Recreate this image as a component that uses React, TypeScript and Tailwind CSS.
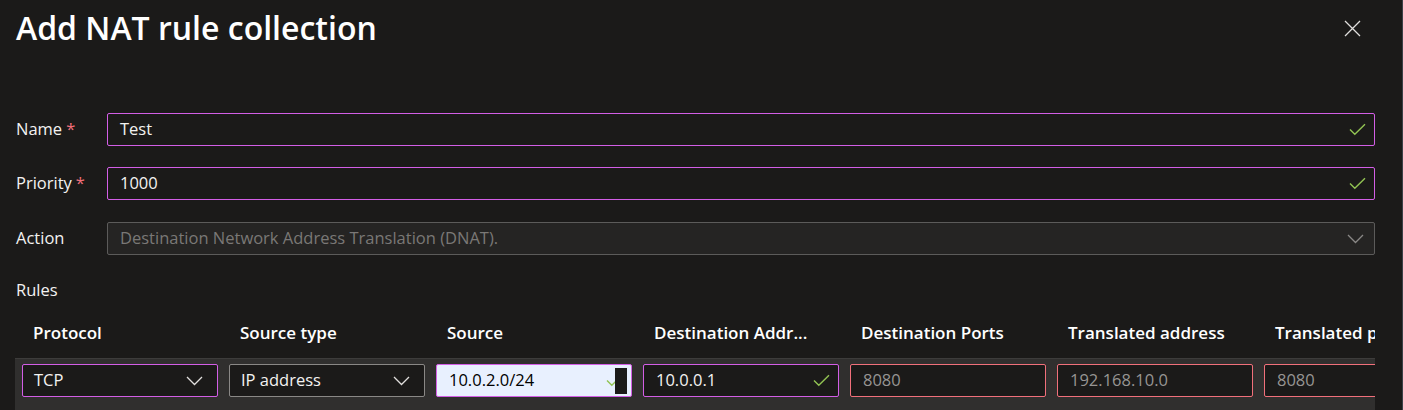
import React from "react";

const font = "font-['Segoe_UI','Open_Sans',sans-serif]";

function Check() {
  return (
    <svg width="17" height="13" viewBox="0 0 17 13" fill="none">
      <path d="M1 6.5 L5.8 11.3 L16 1.2" stroke="#92c353" strokeWidth="1.4" />
    </svg>
  );
}

function Chevron({ color = "#e1dfdd" }: { color?: string }) {
  return (
    <svg width="17" height="10" viewBox="0 0 17 10" fill="none">
      <path d="M1 1 L8.5 8.5 L16 1" stroke={color} strokeWidth="1.3" />
    </svg>
  );
}

function FieldRow({
  label,
  required,
  children,
  className = "",
}: {
  label: string;
  required?: boolean;
  children: React.ReactNode;
  className?: string;
}) {
  return (
    <div className={`flex items-center ${className}`}>
      <div className="w-[91px] shrink-0 text-[16.5px] text-[#f3f2f1]">
        {label}
        {required && <span className="ml-1 text-[#f1707b]">*</span>}
      </div>
      {children}
    </div>
  );
}

type Cell = {
  value: string;
  kind: "select" | "valid" | "autofill" | "error";
};

const headers = [
  "Protocol",
  "Source type",
  "Source",
  "Destination Addr...",
  "Destination Ports",
  "Translated address",
  "Translated p",
];

const cells: Cell[] = [
  { value: "TCP", kind: "select" },
  { value: "IP address", kind: "select" },
  { value: "10.0.2.0/24", kind: "autofill" },
  { value: "10.0.0.1", kind: "valid" },
  { value: "8080", kind: "error" },
  { value: "192.168.10.0", kind: "error" },
  { value: "8080", kind: "error" },
];

function RuleCell({ cell, index }: { cell: Cell; index: number }) {
  if (cell.kind === "select") {
    const border = index === 0 ? "border-[#d35ee6]" : "border-[#8a8886]";
    return (
      <div
        className={`flex h-[33px] w-[196px] shrink-0 items-center justify-between rounded-[2px] border ${border} bg-[#1b1a19] pl-[11px] pr-[14px] text-[16.5px] text-[#f3f2f1]`}
      >
        <span>{cell.value}</span>
        <Chevron />
      </div>
    );
  }
  if (cell.kind === "autofill") {
    return (
      <div className="flex h-[33px] w-[196px] shrink-0 items-center justify-between rounded-[2px] border border-[#d35ee6] bg-[#e8f0fe] pl-[12px] pr-[4px] text-[16.5px] text-[#000000]">
        <span>{cell.value}</span>
        <div className="flex items-center">
          <Check />
          <div className="-ml-[8px] h-[26px] w-[12px] bg-[#1b1a19]" />
        </div>
      </div>
    );
  }
  if (cell.kind === "valid") {
    return (
      <div className="flex h-[33px] w-[196px] shrink-0 items-center justify-between rounded-[2px] border border-[#d35ee6] bg-[#1b1a19] pl-[12px] pr-[8px] text-[16.5px] text-[#f3f2f1]">
        <span>{cell.value}</span>
        <Check />
      </div>
    );
  }
  return (
    <div className="flex h-[33px] w-[196px] shrink-0 items-center rounded-[2px] border border-[#f1707b] bg-[#1b1a19] pl-[12px] text-[16.5px] text-[#979593]">
      {cell.value}
    </div>
  );
}

export default function App() {
  return (
    <div
      className={`${font} h-[410px] w-[1403px] overflow-hidden border-r border-[#3b4047] bg-[#1b1a19] pl-[16px] pr-[27px]`}
    >
      <div className="flex items-start justify-between pt-[8px]">
        <h1 className="text-[32px] font-semibold leading-[40px] text-[#ffffff]">
          Add NAT rule collection
        </h1>
        <svg
          className="mr-[14px] mt-[12px]"
          width="17"
          height="17"
          viewBox="0 0 17 17"
          fill="none"
        >
          <path d="M1 1 L16 16 M16 1 L1 16" stroke="#e1dfdd" strokeWidth="1.3" />
        </svg>
      </div>

      <FieldRow label="Name" required className="mt-[65px]">
        <div className="flex h-[33px] flex-1 items-center justify-between rounded-[2px] border border-[#d35ee6] pl-[12px] pr-[8px] text-[16.5px] text-[#f3f2f1]">
          <span>Test</span>
          <Check />
        </div>
      </FieldRow>

      <FieldRow label="Priority" required className="mt-[21px]">
        <div className="flex h-[33px] flex-1 items-center justify-between rounded-[2px] border border-[#d35ee6] pl-[12px] pr-[8px] text-[16.5px] text-[#f3f2f1]">
          <span>1000</span>
          <Check />
        </div>
      </FieldRow>

      <FieldRow label="Action" className="mt-[22px]">
        <div className="flex h-[33px] flex-1 items-center justify-between rounded-[2px] border border-[#5c5b5a] bg-[#252423] pl-[12px] pr-[10px] text-[16.5px] text-[#7a7876]">
          <span>Destination Network Address Translation (DNAT).</span>
          <Chevron color="#8a8886" />
        </div>
      </FieldRow>

      <div className="mt-[23px] text-[16.5px] leading-[24px] text-[#f3f2f1]">Rules</div>

      <div className="-ml-[1px] mt-[17px] overflow-hidden">
        <div className="flex h-[28px] items-center gap-[11px] pl-[7px]">
          {headers.map((h) => (
            <div
              key={h}
              className="w-[196px] shrink-0 whitespace-nowrap pl-[11px] text-[17px] font-semibold text-[#ffffff]"
            >
              {h}
            </div>
          ))}
        </div>
        <div className="mt-[11px] flex h-[60px] gap-[11px] border-t border-[#3d3c3b] bg-[#302f2e] pl-[7px] pt-[5px]">
          {cells.map((c, i) => (
            <RuleCell key={i} cell={c} index={i} />
          ))}
        </div>
      </div>
    </div>
  );
}
